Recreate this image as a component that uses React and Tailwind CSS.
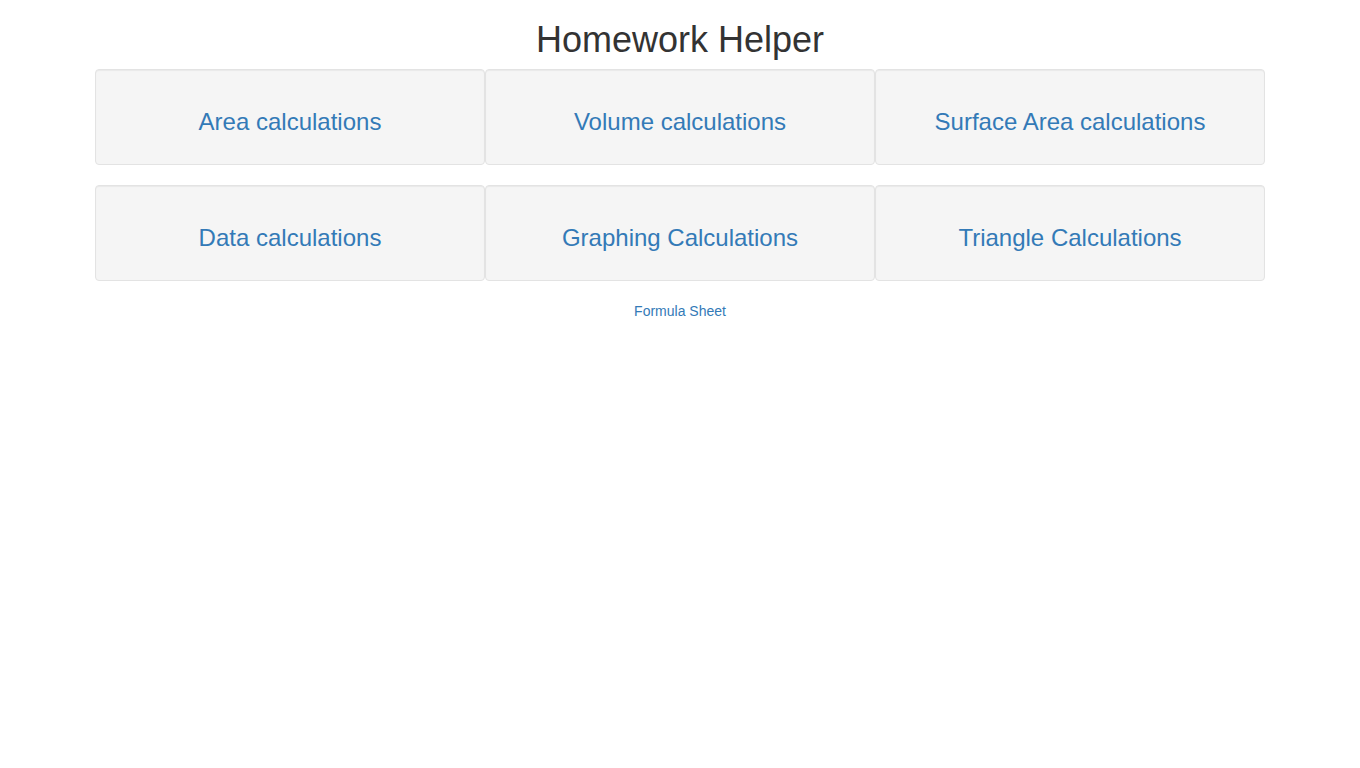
const cards = [
  "Area calculations",
  "Volume calculations",
  "Surface Area calculations",
  "Data calculations",
  "Graphing Calculations",
  "Triangle Calculations",
];

function Card({ label }) {
  return (
    <div className="mb-5 rounded border border-[#e3e3e3] bg-[#f5f5f5] px-[19px] py-[19px] shadow-[inset_0_1px_1px_rgba(0,0,0,0.05)] text-center">
      <h3 className="mt-5 mb-2.5 text-[24px] leading-[1.1] font-normal">
        <a href="#" className="text-[#337ab7] no-underline">{label}</a>
      </h3>
    </div>
  );
}

export default function App() {
  return (
    <div className="min-h-screen bg-white font-['Liberation_Sans',Arial,sans-serif] text-[14px] leading-[1.42857] text-[#333]">
      <div className="mx-auto w-[1170px]">
        <h1 className="mt-5 mb-[9px] text-center text-[36px] leading-[1.1] font-normal">Homework Helper</h1>
        <div className="grid grid-cols-3">
          {cards.map((c) => (
            <Card key={c} label={c} />
          ))}
        </div>
        <div className="pt-px text-center">
          <a href="#" className="text-[#337ab7]">Formula Sheet</a>
        </div>
      </div>
    </div>
  );
}
